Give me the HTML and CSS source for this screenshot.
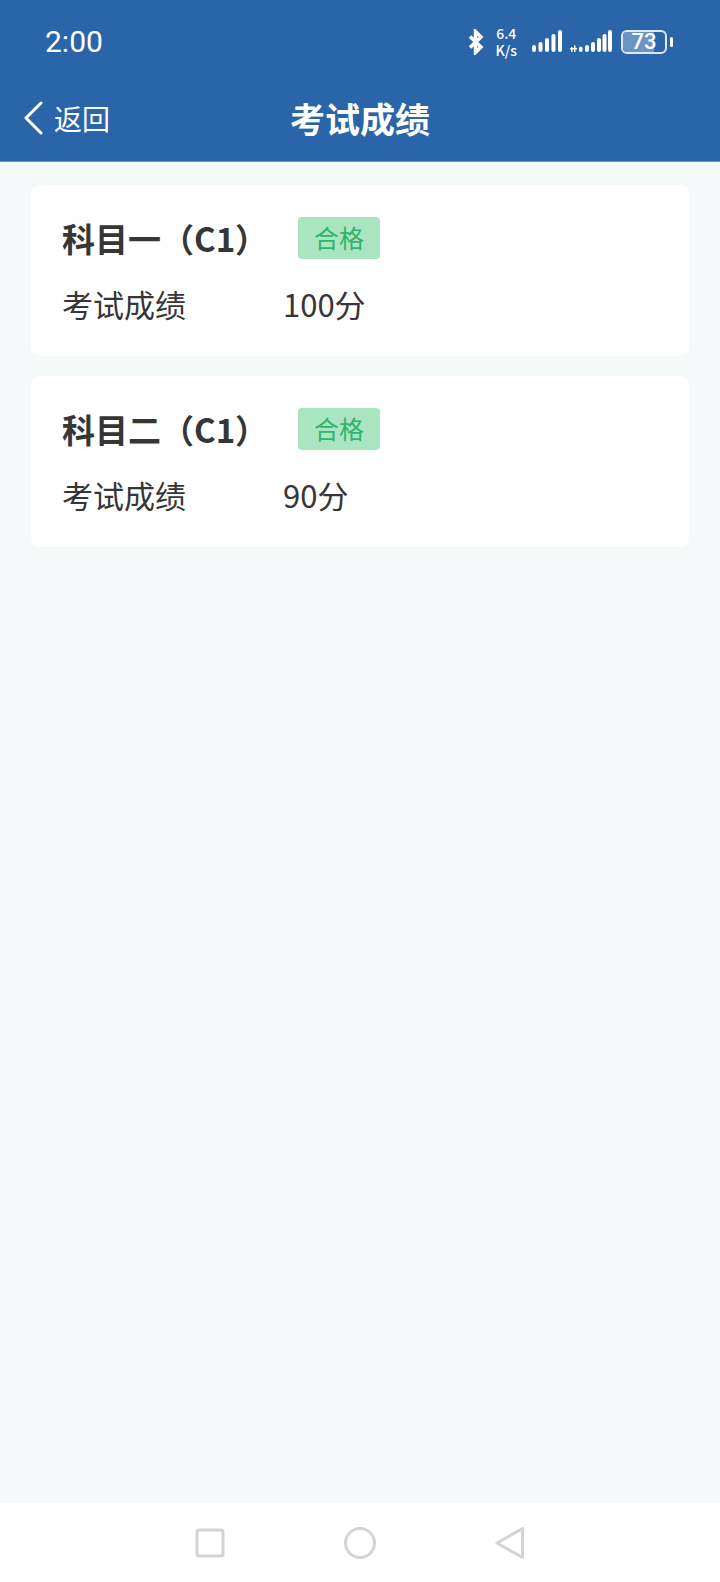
FILE: index.html
```html
<!DOCTYPE html>
<html>
    <head>
        <meta charset="utf-8">
        <title>考试成绩</title>
        <link rel="stylesheet" href="styles.css">
    </head>
    <body>
        <div class="header">
            <div class="status">
                <span class="time">2:00</span>
                <div class="status_icons">
                    <svg class="bt" width="16" height="26" viewBox="0 0 16 26"><path d="M2 7.500 13 18 7.500 23.500V2.500L13 8 2 18.500" fill="none" stroke="#fff" stroke-width="3.500"/></svg>
                    <div class="speed"><span>6.4</span><span>K/s</span></div>
                    <svg class="sig1" width="30" height="26" viewBox="0 0 30 26"><g fill="#fff"><rect x="0" y="16" width="4" height="7" rx="2"/><rect x="6.500" y="13" width="4" height="10" rx="2"/><rect x="13" y="9" width="4" height="14" rx="2"/><rect x="19.500" y="5" width="4" height="18" rx="2"/><rect x="26" y="1" width="4" height="22" rx="2"/></g></svg>
                    <svg class="sig2" width="42" height="26" viewBox="0 0 42 26"><g fill="#fff"><path d="M1 18h1.500v5H1zM4 16.500h1.500v6.500H4z"/><rect x="0" y="19" width="7" height="1.500"/><rect x="9" y="17.500" width="3.500" height="5.500" rx="1.700"/><rect x="15" y="16" width="4" height="7" rx="2"/><rect x="21" y="13" width="4" height="10" rx="2"/><rect x="27" y="9" width="4" height="14" rx="2"/><rect x="32.500" y="5" width="4" height="18" rx="2"/><rect x="38" y="1" width="4" height="22" rx="2"/></g></svg>
                    <div class="battery"><div class="battery_fill"></div><span class="battery_num">73</span></div>
                    <div class="battery_tip"></div>
                </div>
            </div>
            <div class="nav">
                <div class="back">
                    <svg width="22" height="34" viewBox="0 0 22 34"><path d="M19 2 4 17l15 15" fill="none" stroke="#fff" stroke-width="3" stroke-linecap="round" stroke-linejoin="round"/></svg>
                    <span>返回</span>
                </div>
                <h1>考试成绩</h1>
            </div>
        </div>
        <div class="content">
            <div class="card">
                <div class="card_title"><span class="subject">科目一（C1）</span><span class="tag">合格</span></div>
                <div class="card_row"><span class="label">考试成绩</span><span>100分</span></div>
            </div>
            <div class="card">
                <div class="card_title"><span class="subject">科目二（C1）</span><span class="tag">合格</span></div>
                <div class="card_row"><span class="label">考试成绩</span><span>90分</span></div>
            </div>
        </div>
        <div class="navbar">
            <svg width="30" height="30" viewBox="0 0 30 30"><rect x="2" y="2" width="26" height="26" rx="2" fill="none" stroke="#d4d4d4" stroke-width="3"/></svg>
            <svg width="32" height="32" viewBox="0 0 32 32"><circle cx="16" cy="16" r="14.500" fill="none" stroke="#d4d4d4" stroke-width="3"/></svg>
            <svg width="30" height="34" viewBox="0 0 30 34"><path d="M27.500 2.500V31.500L2 17Z" fill="none" stroke="#d4d4d4" stroke-width="3" stroke-linejoin="round"/></svg>
        </div>
    </body>
</html>
```
FILE: styles.css
```css
* {
    font-family: "Noto Sans CJK SC", "Noto Sans", sans-serif;
    box-sizing: border-box;
}
html, body {
    height: 100%;
}
body {
    margin: 0;
    height: 1582px;
    overflow: hidden;
    display: flex;
    flex-direction: column;
    background-color: #f5f9fa;
    color: #363636;
}
.header {
    background-color: #2b65a9;
    color: #fff;
    height: 162px;
    border-bottom: 1px solid #6f97c4;
}
.status {
    height: 80px;
    display: flex;
    align-items: center;
    justify-content: space-between;
    padding: 3px 47px 0 45px;
}
.time {
    font-family: Roboto, sans-serif;
    font-size: 30px;
}
.status_icons {
    display: flex;
    align-items: center;
}
.speed {
    display: flex;
    flex-direction: column;
    align-items: center;
    font-family: Roboto, sans-serif;
    font-size: 14px;
    font-weight: 500;
    line-height: 17px;
    margin: 0 15px 0 12px;
}
.sig2 {
    margin: 0 9px 0 8px;
}
.battery {
    position: relative;
    width: 46px;
    height: 24px;
    border: 2px solid #dfe8f2;
    border-radius: 6px;
    display: flex;
    align-items: center;
    justify-content: center;
    overflow: hidden;
}
.battery_fill {
    position: absolute;
    left: 0;
    top: 0;
    bottom: 0;
    width: 73%;
    background-color: #6c94c3;
}
.battery_num {
    position: relative;
    font-family: Roboto, sans-serif;
    font-size: 22px;
    font-weight: 500;
}
.battery_tip {
    width: 3px;
    height: 10px;
    margin-left: 3px;
    background-color: #fff;
    border-radius: 2px;
}
.nav {
    position: relative;
    height: 80px;
    display: flex;
    align-items: center;
    justify-content: center;
    padding-bottom: 4px;
}
.back {
    position: absolute;
    left: 22px;
    top: 20px;
    display: flex;
    align-items: center;
    font-size: 28px;
    line-height: 36px;
}
.back span {
    margin-left: 10px;
}
h1 {
    margin: 0;
    font-size: 35px;
    font-weight: bold;
    line-height: 46px;
}
.content {
    flex-grow: 1;
    padding: 23px 31px 0;
}
.card {
    background-color: #fff;
    border-radius: 8px;
    height: 171px;
    padding: 32px 31px 0;
    margin-bottom: 20px;
}
.card_title {
    display: flex;
    align-items: center;
    height: 42px;
}
.subject {
    font-size: 33px;
    font-weight: bold;
    line-height: 42px;
    width: 236px;
}
.tag {
    width: 82px;
    height: 42px;
    line-height: 40px;
    text-align: center;
    background-color: #a9e5c0;
    color: #2fb56d;
    border-radius: 4px;
    font-size: 25px;
}
.card_row {
    display: flex;
    margin-top: 23px;
    font-size: 31px;
    line-height: 44px;
}
.label {
    width: 221px;
}
.navbar {
    height: 79px;
    background-color: #fff;
    display: flex;
    align-items: center;
    justify-content: center;
    gap: 119px;
}
```
